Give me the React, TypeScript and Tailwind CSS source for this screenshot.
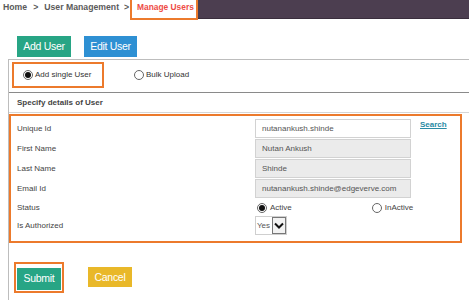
const labels = ["Unique Id", "First Name", "Last Name", "Email Id"];
const values = ["nutanankush.shinde", "Nutan Ankush", "Shinde", "nutanankush.shinde@edgeverve.com"];

const Radio = ({ checked }: { checked?: boolean }) => (
  <span className="w-[10px] h-[10px] rounded-full border border-[#666] bg-white flex items-center justify-center shrink-0">
    {checked && <span className="w-[6px] h-[6px] rounded-full bg-[#111]" />}
  </span>
);

const App = () => {
  return (
    <div className="w-[469px] h-[300px] bg-white overflow-hidden font-['Liberation_Sans',Arial,sans-serif] text-[#444]">
      {/* breadcrumb */}
      <div className="flex items-start h-[20px]">
        <div className="flex items-start h-[20px] text-[8.7px] font-bold text-[#5a5a5a] leading-[15px]">
          <span className="ml-[3px]">Home</span>
          <span className="ml-[6px]">&gt;</span>
          <span className="ml-[6px]">User Management</span>
          <span className="ml-[5px] w-[6px] overflow-hidden">&gt;</span>
          <span className="h-[20px] w-[68px] border-x-2 border-b-2 border-[#ec7a2c] pl-[5px] text-[#ee4b45] text-[8.4px] leading-[15px]">
            Manage Users
          </span>
        </div>
        <div className="flex-1 h-[19px] bg-[#4c3e50] border-b border-[#3a2e3d]" />
      </div>

      {/* action buttons */}
      <div className="flex mt-[16px] pl-[17px] gap-[13px]">
        <button className="w-[54px] h-[21px] bg-[#27a585] text-white text-[10.5px] tracking-[-0.3px]">
          Add User
        </button>
        <button className="w-[53px] h-[21px] bg-[#2e90d3] text-white text-[10.5px] tracking-[-0.3px]">
          Edit User
        </button>
      </div>

      {/* panel */}
      <div className="ml-[8px] mt-[2px] border-l border-t border-[#bdbdbd] h-[241px]">
        <div className="flex items-center pt-[2px] pl-[3px]">
          <div className="flex items-center w-[92px] h-[26px] border-2 border-[#ec7a2c] pl-[9px] gap-[2px] text-[8px] text-[#333]">
            <Radio checked />
            <span>Add single User</span>
          </div>
          <div className="ml-[30px] flex items-center gap-[2px] text-[8px] text-[#333]">
            <Radio />
            <span>Bulk Upload</span>
          </div>
        </div>
        <div className="mt-[4px] border-t border-[#8a8a8a]" />
        <div className="h-[20px] pl-[8px] flex items-center text-[8px] font-bold text-[#444] border-b border-[#d6d6d6]">
          Specify details of User
        </div>

        {/* form box */}
        <div className="mt-[1px] w-[453px] h-[129px] border-2 border-[#ec7a2c] pt-[3px] text-[8px]">
          <div className="flex flex-col gap-[1px]">
            {labels.map((label, i) => (
              <div key={label} className="flex items-center h-[19px]">
                <span className="w-[244px] pl-[6px] text-[#444]">{label}</span>
                <div
                  className={`w-[156px] h-[19px] border border-[#d2d2d2] flex items-center pl-[6px] text-[#555] ${
                    i === 0 ? "bg-white" : "bg-[#ebebeb]"
                  }`}
                >
                  {values[i]}
                </div>
                {i === 0 && (
                  <a className="ml-[9px] -mt-[8px] text-[#2a8ba5] font-bold underline text-[8px]">
                    Search
                  </a>
                )}
              </div>
            ))}
          </div>
          <div className="flex items-center h-[17px] mt-[1px]">
            <span className="w-[246px] pl-[6px]">Status</span>
            <div className="flex items-center gap-[3px] text-[#444]">
              <Radio checked />
              <span>Active</span>
            </div>
            <div className="flex items-center gap-[3px] ml-[80px] text-[#444]">
              <Radio />
              <span>InActive</span>
            </div>
          </div>
          <div className="flex items-center h-[19px]">
            <span className="w-[244px] pl-[6px]">Is Authorized</span>
            <div className="flex h-[19px] w-[32px] border border-[#cfcfcf] bg-white">
              <span className="flex-1 flex items-center pl-[1px] text-[#555]">Yes</span>
              <span className="w-[14px] border border-[#777] bg-[#f2f2f2] flex items-center justify-center">
                <svg width="10" height="7" viewBox="0 0 10 7">
                  <path d="M1 1.5 L5 5.5 L9 1.5" fill="none" stroke="#111" strokeWidth="2" />
                </svg>
              </span>
            </div>
          </div>
        </div>

        {/* submit / cancel */}
        <div className="flex items-center mt-[19px] pl-[5px]">
          <div className="border-2 border-[#ec7a2c] p-[1px]">
            <button className="w-[44px] h-[22px] bg-[#27a585] text-white text-[10.5px] tracking-[-0.3px]">
              Submit
            </button>
          </div>
          <button className="ml-[24px] w-[44px] h-[20px] bg-[#e9b829] text-white text-[10.5px] tracking-[-0.3px]">
            Cancel
          </button>
        </div>
      </div>
    </div>
  );
};

export default App;
